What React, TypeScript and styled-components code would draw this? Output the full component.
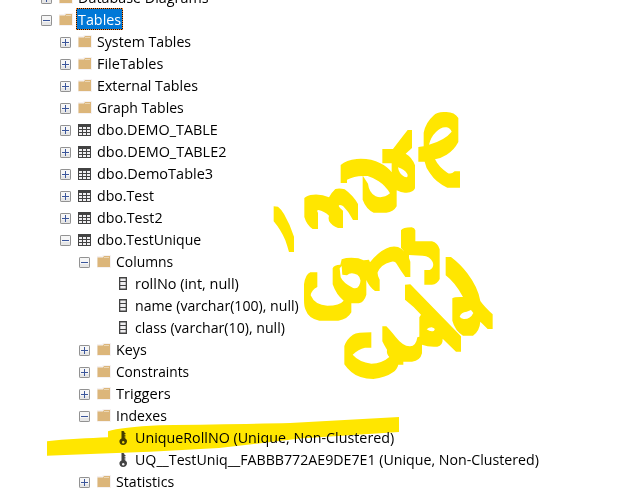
import React, { useLayoutEffect, useRef, useState } from 'react';
import styled, { createGlobalStyle } from 'styled-components';

const GlobalStyle = createGlobalStyle`
  body { margin: 0; background: #fff; overflow: hidden; }
`;

type IconKind = 'folder' | 'table' | 'column' | 'key';

interface TreeItem {
  label: string;
  level: number;
  icon: IconKind;
  width: number;
  state?: 'open' | 'closed';
  selected?: boolean;
}

const items: TreeItem[] = [
  { label: 'Database Diagrams', level: 0, icon: 'folder', width: 131, state: 'closed' },
  { label: 'Tables', level: 0, icon: 'folder', width: 43, state: 'open', selected: true },
  { label: 'System Tables', level: 1, icon: 'folder', width: 94.5, state: 'closed' },
  { label: 'FileTables', level: 1, icon: 'folder', width: 66.5, state: 'closed' },
  { label: 'External Tables', level: 1, icon: 'folder', width: 100.5, state: 'closed' },
  { label: 'Graph Tables', level: 1, icon: 'folder', width: 87, state: 'closed' },
  { label: 'dbo.DEMO_TABLE', level: 1, icon: 'table', width: 121, state: 'closed' },
  { label: 'dbo.DEMO_TABLE2', level: 1, icon: 'table', width: 129, state: 'closed' },
  { label: 'dbo.DemoTable3', level: 1, icon: 'table', width: 116, state: 'closed' },
  { label: 'dbo.Test', level: 1, icon: 'table', width: 57.5, state: 'closed' },
  { label: 'dbo.Test2', level: 1, icon: 'table', width: 65.5, state: 'closed' },
  { label: 'dbo.TestUnique', level: 1, icon: 'table', width: 104, state: 'open' },
  { label: 'Columns', level: 2, icon: 'folder', width: 57.5, state: 'open' },
  { label: 'rollNo (int, null)', level: 3, icon: 'column', width: 104 },
  { label: 'name (varchar(100), null)', level: 3, icon: 'column', width: 164 },
  { label: 'class (varchar(10), null)', level: 3, icon: 'column', width: 150 },
  { label: 'Keys', level: 2, icon: 'folder', width: 30.5, state: 'closed' },
  { label: 'Constraints', level: 2, icon: 'folder', width: 73, state: 'closed' },
  { label: 'Triggers', level: 2, icon: 'folder', width: 54.5, state: 'closed' },
  { label: 'Indexes', level: 2, icon: 'folder', width: 50.5, state: 'open' },
  { label: 'UniqueRollNO (Unique, Non-Clustered)', level: 3, icon: 'key', width: 259 },
  { label: 'UQ__TestUniq__FABBB772AE9DE7E1 (Unique, Non-Clustered)', level: 3, icon: 'key', width: 404 },
  { label: 'Statistics', level: 2, icon: 'folder', width: 58.5, state: 'closed' },
];

const Screen = styled.main`
  position: relative;
  width: 627px;
  height: 490px;
  overflow: hidden;
  background: #fff;
`;

const Tree = styled.ul`
  list-style: none;
  margin: -14px 0 0;
  padding: 0;
`;

const Row = styled.li<{ $level: number }>`
  display: flex;
  align-items: center;
  height: 22px;
  padding-left: ${({ $level }) => 41 + $level * 19}px;
`;

const Toggle = styled.svg`
  flex: none;
  width: 11px;
  height: 11px;
  margin: 3px 7px 0 0;
`;

const Glyph = styled.svg`
  flex: none;
  width: 14px;
  height: 14px;
  margin: 2px 3px 0 0;
`;

const LabelBox = styled.span<{ $selected?: boolean }>`
  box-sizing: border-box;
  display: flex;
  align-items: center;
  height: 22px;
  padding: 0 1px;
  border: 1px dotted ${({ $selected }) => ($selected ? '#ff8728' : 'transparent')};
  background: ${({ $selected }) =>
    $selected
      ? 'linear-gradient(#0078d7, #0078d7) padding-box, linear-gradient(#111, #111) border-box'
      : 'transparent'};
  color: ${({ $selected }) => ($selected ? '#fff' : '#000')};
`;

const LabelFit = styled.span<{ $width: number }>`
  display: block;
  width: ${({ $width }) => $width}px;
`;

const LabelText = styled.span`
  display: inline-block;
  font: 15px/20px 'Open Sans', 'Noto Sans', sans-serif;
  white-space: pre;
  transform-origin: 0 50%;
`;

const Ink = styled.svg`
  position: absolute;
  inset: 0;
  width: 627px;
  height: 490px;
  mix-blend-mode: multiply;
  pointer-events: none;
`;

function Label({ item }: { item: TreeItem }) {
  const ref = useRef<HTMLSpanElement>(null);
  const [scale, setScale] = useState(1);
  useLayoutEffect(() => {
    if (ref.current) setScale(item.width / ref.current.offsetWidth);
  }, [item.width]);
  return (
    <LabelBox $selected={item.selected}>
      <LabelFit $width={item.width}>
        <LabelText ref={ref} style={{ transform: `scaleX(${scale})` }}>{item.label}</LabelText>
      </LabelFit>
    </LabelBox>
  );
}

function Expander({ state }: { state?: 'open' | 'closed' }) {
  return (
    <Toggle viewBox="0 0 11 11">
      {state && (
        <>
          <rect x=".5" y=".5" width="10" height="10" rx=".6" fill="#f6f6f6" stroke="#929292" />
          <path d="M1 7h9v3H1z" fill="#e6e6e6" />
          <path d="M2 5.5h7" stroke="#3b569b" />
          {state === 'closed' && <path d="M5.5 2v7" stroke="#3b569b" />}
        </>
      )}
    </Toggle>
  );
}

function NodeIcon({ kind }: { kind: IconKind }) {
  if (kind === 'folder') {
    return (
      <Glyph viewBox="0 0 14 14">
        <path d="M0 1h5l1-1h8v13H0z" fill="#f6f2f2" />
        <path d="M.5 2.5H6l1-1.5h6V12H.5z" fill="#dcb67a" />
        <path d="M7 2.5h5" stroke="#efdfc4" strokeWidth=".8" />
      </Glyph>
    );
  }
  if (kind === 'table') {
    return (
      <Glyph viewBox="0 0 14 14">
        <path d="M0 1h13v12H0z" fill="#424242" />
        <path
          d="M1 4h3v2H1zM5 4h3v2H5zM9 4h3v2H9zM1 7h3v2H1zM5 7h3v2H5zM9 7h3v2H9zM1 10h3v2H1zM5 10h3v2H5zM9 10h3v2H9z"
          fill="#f0eff1"
        />
      </Glyph>
    );
  }
  if (kind === 'column') {
    return (
      <Glyph viewBox="0 0 14 14">
        <path d="M3 0h8v13H3z" fill="#424242" />
        <path d="M4.3 1.5h5.4V4H4.3zM4.3 5h5.4v3H4.3zM4.3 9h5.4v2.6H4.3z" fill="#f0eff1" />
      </Glyph>
    );
  }
  return (
    <Glyph viewBox="0 0 14 14">
      <path
        d="M5.5 0h2l1 1v1h1v1.2h-1v1h1v1.2h-1v1h1v1.2h-.6C10.3 8 11 9 11 10.2 11 12.4 9.3 14 7.1 14S3.4 12.4 3.4 10.3C3.4 9 4.2 8 5.5 7.4z"
        fill="#424242"
      />
      <circle cx="7.2" cy="11.2" r="1.2" fill="#f0eff1" />
    </Glyph>
  );
}

function Handwriting() {
  return (
    <Ink viewBox="0 0 627 490" fill="#ffe600" fillRule="evenodd">
      <g transform="translate(260 100) scale(.33333)">
        <path d="M41 319L54 320Q63 327 72 342Q90 373 102 410V456H87Q82 438 76 421Q63 390 41 364Z" />
        <path d="M133 294Q142 285 160 284Q185 282 207 292Q215 277 226 267Q239 264 254 268Q279 286 294 312V360H279Q267 335 249 318Q237 312 236 318Q239 325 249 332V384H234Q216 378 207 363Q204 354 207 347Q192 333 175 330Q169 331 174 338V387H158Q140 375 133 351Z" />
        <path d="M242 195Q259 180 290 177Q330 174 361 190Q382 200 395 217V190H367V147H399Q417 123 443 90H456V144L437 161Q456 171 465 196V265Q461 277 440 278Q426 280 410 271V319Q400 337 379 338H341Q318 327 308 299V228Q282 229 261 239V249H242Z M323 228H309L324 251Q327 278 347 289Q369 297 390 280Q376 257 356 244Q340 233 323 228Z M414 202Q416 221 433 230Q446 235 442 222Q434 209 414 202Z" />
        <path d="M475 141L491 139V98Q497 67 520 47Q531 35 554 36Q583 34 595 54V126Q582 151 560 164Q542 175 525 178Q537 202 562 218Q572 225 584 214H600V263H562Q528 248 510 220Q497 203 494 185H475Z M507 134Q513 110 528 96Q544 79 560 82Q571 84 575 95Q554 121 507 134Z" />
      </g>
      <g transform="translate(290 220) scale(.33333)">
        <path d="M42 193Q46 163 61 157H82V201Q65 209 62 226Q75 256 112 257Q149 257 161 242Q139 225 128 193V145Q132 134 151 134L155 118Q174 111 205 115L221 121L237 119L240 127Q267 92 300 81Q321 77 334 86L344 96L333 83V31Q338 22 365 22Q374 23 376 31V64H426Q443 68 449 88V177Q442 193 426 194H403V150H419Q434 142 428 126Q420 108 398 107L357 105V114L361 125V171H346Q334 155 322 135Q315 121 302 126Q273 133 263 157Q262 168 269 179V213H255Q238 201 229 180V224Q223 246 206 250H184V277Q173 298 145 302H88Q56 296 47 270Q42 260 42 240Z M155 138L149 145L152 172Q161 191 188 203Q201 208 207 197Q218 176 202 164Q182 154 171 166L157 164Z" />
        <path d="M163 378Q170 357 189 344Q201 337 244 337V383H225Q205 388 188 404Q207 426 244 431Q277 430 298 411Q289 402 291 389Q283 377 277 364V319H289Q300 330 317 351Q338 378 359 379Q378 380 382 352L388 350V292L393 284Q369 257 345 239V194L361 193L513 349V395H498L458 356Q459 376 442 380Q415 382 396 374V400Q391 422 366 425H340V434H325Q321 449 309 457Q287 473 250 477Q207 476 184 456Q169 443 163 433Z M410 328Q423 337 432 332Q439 326 425 322Q416 322 410 328Z" />
        <path d="M467 111H483Q512 133 532 160Q564 202 571 243Q583 260 608 283V327H593L571 305Q569 333 549 347H519Q495 332 487 302V235Q493 230 519 231Q495 187 467 166Z M509 290Q513 276 530 275L543 270L550 279Q541 298 521 297Q513 295 509 290Z" />
      </g>
      <path d="M47 441.2C65 439 90 438 108 437.2V431.3Q121 427 160 425.2Q245 424 290 423L399 417V432L300 438.6L219 448L150 451.8Q95 454 47 455.8Z" />
    </Ink>
  );
}

export default function App() {
  return (
    <Screen>
      <GlobalStyle />
      <Tree>
        {items.map((item) => (
          <Row key={item.label} $level={item.level}>
            <Expander state={item.state} />
            <NodeIcon kind={item.icon} />
            <Label item={item} />
          </Row>
        ))}
      </Tree>
      <Handwriting />
    </Screen>
  );
}
